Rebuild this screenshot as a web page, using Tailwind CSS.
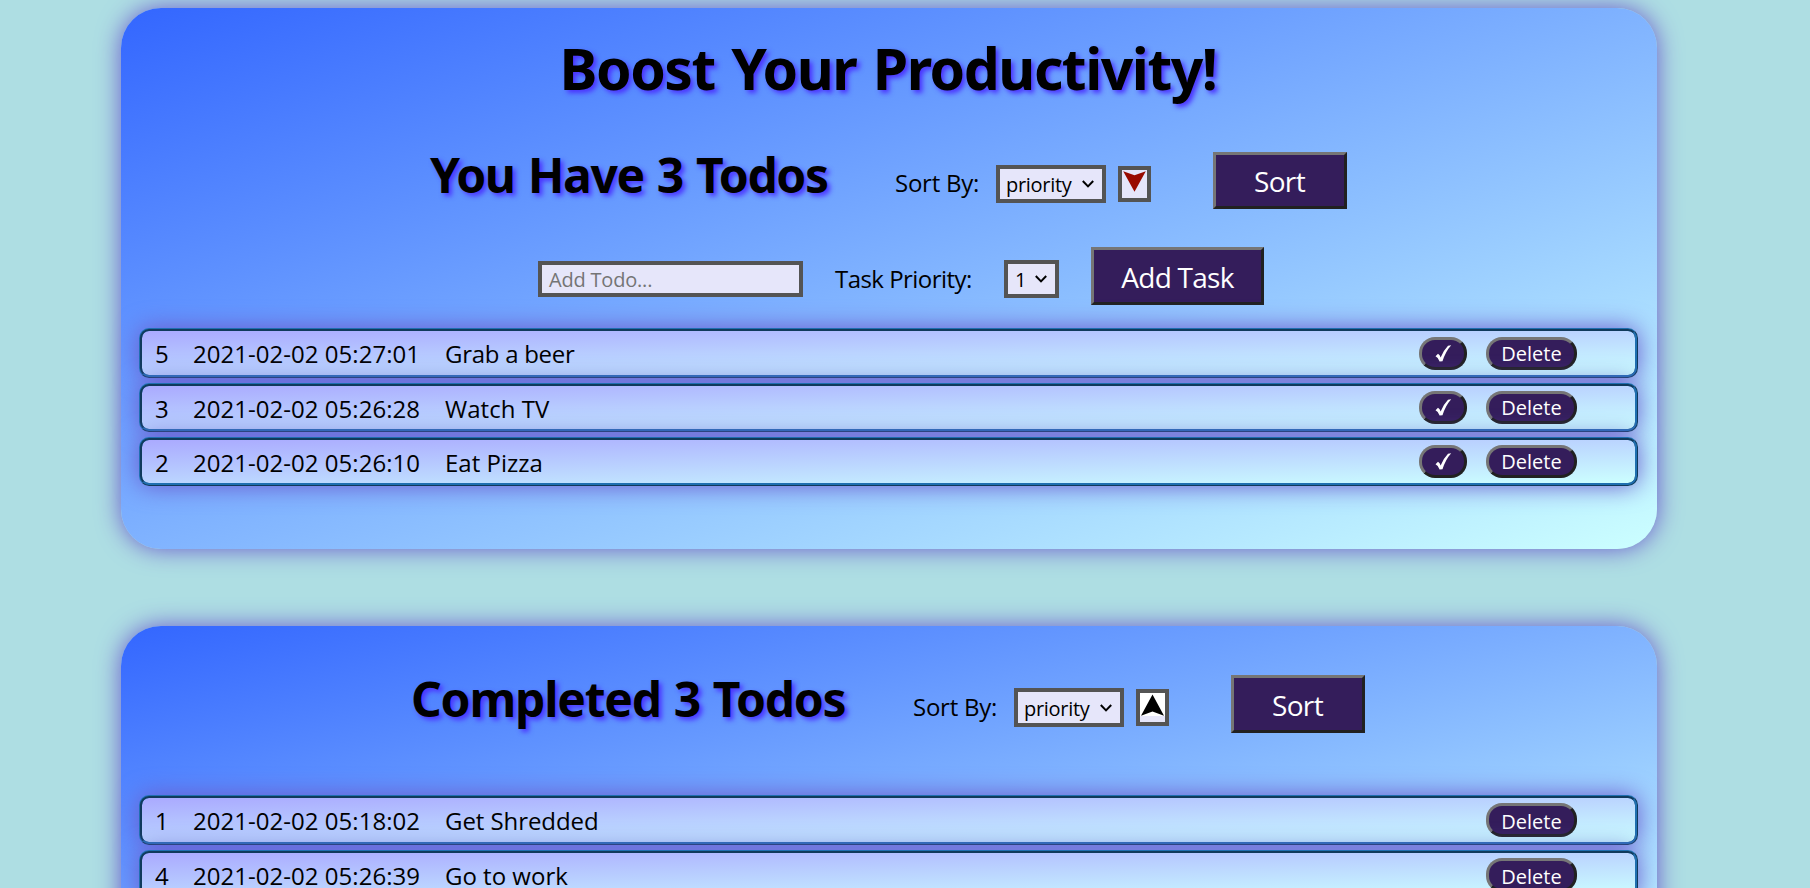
<!DOCTYPE html>
<html lang="en">
<head>
<meta charset="utf-8">
<title>Todos</title>
<script src="https://cdn.jsdelivr.net/npm/@tailwindcss/browser@4"></script>
</head>
<body class="h-[888px] overflow-hidden bg-[#aedee3] pt-2 pl-[121px] font-['Open_Sans','Noto_Sans',sans-serif] text-2xl text-black">

<section class="h-[541px] w-[1536px] rounded-[40px] bg-[linear-gradient(to_bottom_right,#3366ff,#ccffff)] pr-[19px] pl-[18px] pt-px shadow-[0_0_25px_slateblue]">
  <h1 class="mt-[20px] flex h-[78px] items-center justify-center pr-[1px] font-['Noto_Sans','Open_Sans',sans-serif] text-[57px] leading-[78px] font-bold tracking-[-1.45px] [word-spacing:3px] whitespace-nowrap [text-shadow:3px_3px_5px_#4b32ff]">Boost Your Productivity!</h1>

  <div class="mt-[45px] flex h-[58px] items-start whitespace-nowrap">
    <h2 class="mt-[-6px] ml-[291px] w-[465px] font-['Noto_Sans','Open_Sans',sans-serif] text-[48px] leading-[58px] font-bold tracking-[-1.4px] [word-spacing:2px] [text-shadow:3px_3px_5px_#4b32ff]">You Have 3 Todos</h2>
    <span class="mt-[13px] w-[101px] leading-9 tracking-[-0.25px]">Sort By:</span>
    <div class="mt-[13px] flex h-[38px] w-[110px] items-center border-4 border-[#545454] bg-[#e6e6fa] pl-1.5 text-xl leading-[30px] tracking-[-0.3px]">
      <span class="mt-0.5 w-[76px]">priority</span>
      <svg class="h-2 w-3" viewBox="0 0 12 8" fill="none" stroke="#000" stroke-width="2"><path d="M.8 1 6 6.4 11.2 1"/></svg>
    </div>
    <div class="mt-3.5 ml-3 flex h-9 w-[33px] justify-center border-4 border-[#545454] bg-[#e6e6fa]">
      <svg class="h-[22px] w-[25px]" viewBox="0 0 25 22"><path fill="#990a00" d="M1.2 1.2 12.5 5.3 23.8 1.2 12.5 21.8z"/></svg>
    </div>
    <div class="ml-[62px] flex h-[57px] w-[134px] items-center justify-center border-3 border-t-[#767676] border-r-[#212121] border-b-[#212121] border-l-[#767676] bg-[#341d5b] pr-px text-[28px] leading-[50px] tracking-[-0.6px] text-white">Sort</div>
  </div>

  <div class="mt-[37px] flex h-[58px] items-start whitespace-nowrap">
    <div class="mt-[14px] ml-[399px] flex h-9 w-[265px] items-center border-4 border-[#545454] bg-[#e6e6fa] pl-[7px] text-xl leading-7 tracking-[-0.2px] text-[#757575]"><span class="mt-0.5">Add Todo...</span></div>
    <span class="mt-[14px] ml-[32px] w-[169px] leading-9 tracking-[-0.54px]">Task Priority:</span>
    <div class="mt-[13px] flex h-[38px] w-[55px] items-center border-4 border-[#545454] bg-[#e6e6fa] pl-[7px] text-xl leading-[30px]">
      <span class="mt-0.5 w-[20px]">1</span>
      <svg class="h-2 w-3" viewBox="0 0 12 8" fill="none" stroke="#000" stroke-width="2"><path d="M.8 1 6 6.4 11.2 1"/></svg>
    </div>
    <div class="ml-[32px] flex h-[58px] w-[173px] items-center justify-center border-3 border-t-[#767676] border-r-[#212121] border-b-[#212121] border-l-[#767676] bg-[#341d5b] pt-px text-[28px] leading-[50px] tracking-[-0.75px] text-white">Add Task</div>
  </div>

  <ul class="mt-[23px] flex flex-col gap-[5px]">
    <li class="flex h-[50px] w-[1499px] items-center rounded-[10px] border-3 border-[#1f6fb0] [border-style:ridge] bg-[linear-gradient(to_bottom_right,#aaaaff,#ccffff)] pl-[13px] leading-9 whitespace-nowrap shadow-[0_0_25px_slateblue]">
      <span class="mt-0.5 w-[38px]">5</span>
      <span class="mt-0.5 w-[252px] tracking-[0.03px]">2021-02-02 05:27:01</span>
      <span class="mt-0.5 w-[974px] tracking-[-0.27px]">Grab a beer</span>
      <div class="flex h-[33px] w-12 items-center justify-center rounded-[16px] border-3 border-t-[#767676] border-r-[#212121] border-b-[#212121] border-l-[#767676] bg-[#341d5b]"><svg class="h-[17px] w-[17px]" viewBox="0 0 17 17" fill="#fff"><path d="M.5 11.2 3 8.700Q5 10 5.600 12.500 8.500 5.500 13 .800L16.200.200Q10.500 6.500 7.500 16.200L4.600 16.600Q3.500 12.500 .500 11.200z"/></svg></div>
      <div class="ml-[19px] flex h-[33px] w-[91px] items-center justify-center rounded-[16px] border-3 border-t-[#767676] border-r-[#212121] border-b-[#212121] border-l-[#767676] bg-[#341d5b] text-xl leading-[27px] text-white">Delete</div>
    </li>
    <li class="flex h-[49px] w-[1499px] items-center rounded-[10px] border-3 border-[#1f6fb0] [border-style:ridge] bg-[linear-gradient(to_bottom_right,#aaaaff,#ccffff)] pl-[13px] leading-9 whitespace-nowrap shadow-[0_0_25px_slateblue]">
      <span class="mt-0.5 w-[38px]">3</span>
      <span class="mt-0.5 w-[252px] tracking-[0.03px]">2021-02-02 05:26:28</span>
      <span class="mt-0.5 w-[974px] tracking-[0.04px]">Watch TV</span>
      <div class="flex h-[33px] w-12 items-center justify-center rounded-[16px] border-3 border-t-[#767676] border-r-[#212121] border-b-[#212121] border-l-[#767676] bg-[#341d5b]"><svg class="h-[17px] w-[17px]" viewBox="0 0 17 17" fill="#fff"><path d="M.5 11.2 3 8.700Q5 10 5.600 12.500 8.500 5.500 13 .800L16.200.200Q10.500 6.500 7.500 16.200L4.600 16.600Q3.500 12.500 .500 11.200z"/></svg></div>
      <div class="ml-[19px] flex h-[33px] w-[91px] items-center justify-center rounded-[16px] border-3 border-t-[#767676] border-r-[#212121] border-b-[#212121] border-l-[#767676] bg-[#341d5b] text-xl leading-[27px] text-white">Delete</div>
    </li>
    <li class="flex h-[49px] w-[1499px] items-center rounded-[10px] border-3 border-[#1f6fb0] [border-style:ridge] bg-[linear-gradient(to_bottom_right,#aaaaff,#ccffff)] pl-[13px] leading-9 whitespace-nowrap shadow-[0_0_25px_slateblue]">
      <span class="mt-0.5 w-[38px]">2</span>
      <span class="mt-0.5 w-[252px] tracking-[0.03px]">2021-02-02 05:26:10</span>
      <span class="mt-0.5 w-[974px]">Eat Pizza</span>
      <div class="flex h-[33px] w-12 items-center justify-center rounded-[16px] border-3 border-t-[#767676] border-r-[#212121] border-b-[#212121] border-l-[#767676] bg-[#341d5b]"><svg class="h-[17px] w-[17px]" viewBox="0 0 17 17" fill="#fff"><path d="M.5 11.2 3 8.700Q5 10 5.600 12.500 8.500 5.500 13 .800L16.200.200Q10.500 6.500 7.500 16.200L4.600 16.600Q3.500 12.500 .500 11.200z"/></svg></div>
      <div class="ml-[19px] flex h-[33px] w-[91px] items-center justify-center rounded-[16px] border-3 border-t-[#767676] border-r-[#212121] border-b-[#212121] border-l-[#767676] bg-[#341d5b] text-xl leading-[27px] text-white">Delete</div>
    </li>
  </ul>
</section>

<section class="mt-[77px] h-[391px] w-[1536px] rounded-[40px] bg-[linear-gradient(to_bottom_right,#3366ff,#ccffff)] pr-[19px] pl-[18px] pt-[49px] shadow-[0_0_25px_slateblue]">
  <div class="flex h-[58px] items-start whitespace-nowrap">
    <h2 class="mt-[-5px] ml-[272px] w-[502px] font-['Noto_Sans','Open_Sans',sans-serif] text-[48px] leading-[58px] font-bold tracking-[-1.2px] [word-spacing:1.5px] [text-shadow:3px_3px_5px_#4b32ff]">Completed 3 Todos</h2>
    <span class="mt-[14px] w-[101px] leading-9 tracking-[-0.25px]">Sort By:</span>
    <div class="mt-[13px] flex h-[39px] w-[110px] items-center border-4 border-[#545454] bg-[#e6e6fa] pl-1.5 text-xl leading-[30px] tracking-[-0.3px]">
      <span class="mt-0.5 w-[76px]">priority</span>
      <svg class="h-2 w-3" viewBox="0 0 12 8" fill="none" stroke="#000" stroke-width="2"><path d="M.8 1 6 6.4 11.2 1"/></svg>
    </div>
    <div class="mt-3.5 ml-3 flex h-[37px] w-[33px] justify-center border-4 border-[#545454] bg-[#e6e6fa]">
      <svg class="h-6 w-[25px]" viewBox="0 0 25 24"><path fill="#fff" d="M0 0h25v23H0z"/><path fill="#000" d="M12.500 1.500 24 22.800 12.500 18.600 1 22.800z"/></svg>
    </div>
    <div class="ml-[62px] flex h-[58px] w-[134px] items-center justify-center border-3 border-t-[#767676] border-r-[#212121] border-b-[#212121] border-l-[#767676] bg-[#341d5b] pt-px pr-px text-[28px] leading-[50px] tracking-[-0.6px] text-white">Sort</div>
  </div>

  <ul class="mt-[62px] flex flex-col gap-[5px]">
    <li class="flex h-[50px] w-[1499px] shrink-0 items-center rounded-[10px] border-3 border-[#1f6fb0] [border-style:ridge] bg-[linear-gradient(to_bottom_right,#aaaaff,#ccffff)] pl-[13px] leading-9 whitespace-nowrap shadow-[0_0_25px_slateblue]">
      <span class="mt-0.5 w-[38px]">1</span>
      <span class="mt-0.5 w-[252px] tracking-[0.03px]">2021-02-02 05:18:02</span>
      <span class="mt-0.5 w-[1041px] tracking-[-0.07px]">Get Shredded</span>
      <div class="flex h-[34px] w-[91px] items-center justify-center rounded-[16px] border-3 border-t-[#767676] border-r-[#212121] border-b-[#212121] border-l-[#767676] bg-[#341d5b] text-xl leading-[27px] text-white"><span class="mt-0.5">Delete</span></div>
    </li>
    <li class="flex h-[50px] w-[1499px] shrink-0 items-center rounded-[10px] border-3 border-[#1f6fb0] [border-style:ridge] bg-[linear-gradient(to_bottom_right,#aaaaff,#ccffff)] pl-[13px] leading-9 whitespace-nowrap shadow-[0_0_25px_slateblue]">
      <span class="mt-0.5 w-[38px]">4</span>
      <span class="mt-0.5 w-[252px] tracking-[0.03px]">2021-02-02 05:26:39</span>
      <span class="mt-0.5 w-[1041px]">Go to work</span>
      <div class="flex h-[34px] w-[91px] items-center justify-center rounded-[16px] border-3 border-t-[#767676] border-r-[#212121] border-b-[#212121] border-l-[#767676] bg-[#341d5b] text-xl leading-[27px] text-white"><span class="mt-0.5">Delete</span></div>
    </li>
  </ul>
</section>

</body>
</html>
